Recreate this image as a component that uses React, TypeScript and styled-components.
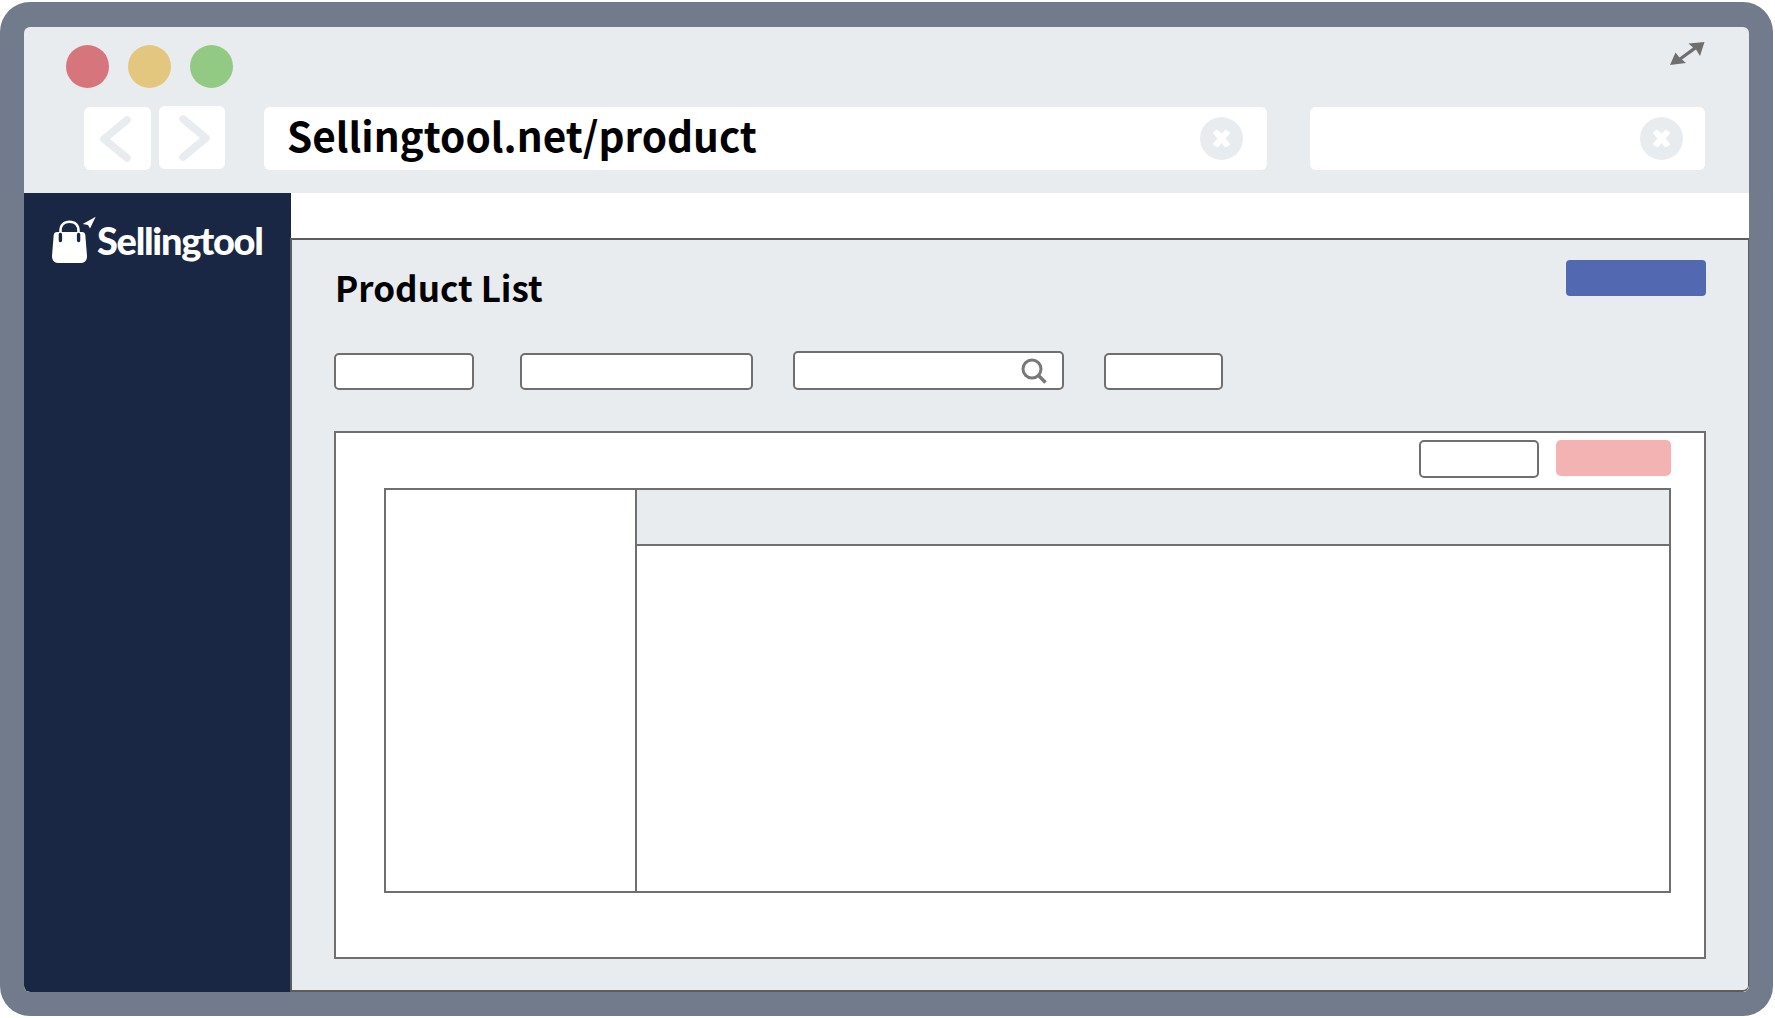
import styled, { createGlobalStyle } from "styled-components";

const lineColor = "#6f6f6f";
const panelColor = "#e9ecef";
const frameColor = "#727b8b";
const uiFont = `"Noto Sans CJK JP", "Noto Sans", sans-serif`;

const GlobalStyle = createGlobalStyle`
  * {
    box-sizing: border-box;
  }
  html,
  body {
    margin: 0;
    background: #fff;
  }
`;

const PageDiv = styled.div`
  padding-top: 2px;
  width: 1775px;
  height: 1018px;
  overflow: hidden;
`;

const BrowserFrame = styled.div`
  width: 1773px;
  height: 1014px;
  padding: 25px 24px 24px 24px;
  border-radius: 30px;
  background: ${frameColor};
`;

const BrowserWindow = styled.div`
  display: flex;
  flex-direction: column;
  height: 100%;
  border-radius: 6px;
  background: ${panelColor};
  overflow: hidden;
`;

const TopBar = styled.header`
  flex: none;
  height: 166px;
  padding: 14px 43px 0 42px;
`;

const LightsRow = styled.div`
  display: flex;
  justify-content: space-between;
  align-items: flex-start;
  height: 66px;
`;

const Lights = styled.div`
  display: flex;
  gap: 19px;
  padding-top: 4px;
`;

const Light = styled.span<{ $color: string }>`
  width: 43px;
  height: 43px;
  border-radius: 50%;
  background: ${(p) => p.$color};
`;

const AddressRow = styled.div`
  display: flex;
  align-items: flex-start;
  padding-left: 18px;
`;

const NavButton = styled.button<{ $width: number; $gapAfter: number; $lift?: boolean }>`
  display: flex;
  align-items: center;
  justify-content: center;
  width: ${(p) => p.$width}px;
  height: 63px;
  margin-right: ${(p) => p.$gapAfter}px;
  margin-top: ${(p) => (p.$lift ? -1 : 0)}px;
  padding: 0;
  border: 0;
  border-radius: 6px;
  background: #fff;
`;

const AddressField = styled.div<{ $width: number; $gapAfter?: number; $inset: number }>`
  display: flex;
  align-items: center;
  justify-content: space-between;
  width: ${(p) => p.$width}px;
  height: 63px;
  margin-right: ${(p) => p.$gapAfter ?? 0}px;
  padding: 0 ${(p) => p.$inset}px 0 23px;
  border-radius: 6px;
  background: #fff;
`;

const AddressText = styled.span`
  margin-top: -7px;
  color: #000;
  font-family: ${uiFont};
  font-size: 40.5px;
  font-weight: 700;
  line-height: 60px;
`;

const ClearButton = styled.span`
  display: flex;
  align-items: center;
  justify-content: center;
  flex: none;
  width: 43px;
  height: 43px;
  margin-left: auto;
  border-radius: 50%;
  background: ${panelColor};
`;

const WindowBody = styled.div`
  flex: 1;
  display: flex;
  min-height: 0;
`;

const Sidebar = styled.aside`
  flex: none;
  width: 267px;
  padding: 23px 0 0 28px;
  background: #1a2744;
  border-bottom-left-radius: 6px;
`;

const Logo = styled.div`
  display: flex;
  align-items: flex-start;
`;

const LogoText = styled.span`
  margin: 0 0 0 -1px;
  color: #fff;
  font-family: Lato, sans-serif;
  font-size: 38px;
  font-weight: 900;
  letter-spacing: -1.3px;
  line-height: 48px;
`;

const MainColumn = styled.div`
  flex: 1;
  display: flex;
  flex-direction: column;
  min-width: 0;
  background: #fff;
`;

const TopStrip = styled.div`
  flex: none;
  height: 45px;
`;

const Panel = styled.main`
  flex: 1;
  min-height: 0;
  margin-left: -1px;
  padding: 20px 42px 0 42px;
  background: ${panelColor};
  border: 2px solid #5c5c5c;
  border-right-width: 1px;
  border-bottom-right-radius: 6px;
`;

const PanelHeader = styled.div`
  display: flex;
  justify-content: space-between;
  align-items: flex-start;
  height: 91px;
`;

const Title = styled.h1`
  margin: 3px 0 0 1px;
  color: #000;
  font-family: ${uiFont};
  font-size: 35px;
  font-weight: 700;
  line-height: 48px;
`;

const PrimaryButton = styled.button`
  width: 140px;
  height: 36px;
  border: 0;
  border-radius: 4px;
  background: #5269b2;
`;

const FilterRow = styled.div`
  display: flex;
  align-items: flex-end;
  height: 39px;
  margin-bottom: 41px;
`;

const FilterBox = styled.div<{ $width: number; $gapAfter?: number; $tall?: boolean }>`
  display: flex;
  align-items: center;
  justify-content: flex-end;
  width: ${(p) => p.$width}px;
  height: ${(p) => (p.$tall ? 39 : 37)}px;
  margin-right: ${(p) => p.$gapAfter ?? 0}px;
  padding-right: 15px;
  border: 2px solid ${lineColor};
  border-radius: 5px;
  background: #fff;
`;

const Card = styled.section`
  height: 528px;
  padding: 7px 33px 0 48px;
  border: 2px solid ${lineColor};
  background: #fff;
`;

const CardActions = styled.div`
  display: flex;
  justify-content: flex-end;
  gap: 17px;
  height: 48px;
`;

const OutlineButton = styled.button`
  width: 120px;
  height: 38px;
  border: 2px solid ${lineColor};
  border-radius: 5px;
  background: #fff;
`;

const DangerButton = styled.button`
  width: 115px;
  height: 36px;
  border: 0;
  border-radius: 5px;
  background: #f4b3b3;
`;

const TableBox = styled.div`
  display: flex;
  height: 405px;
  border: 2px solid ${lineColor};
`;

const TableSide = styled.div`
  flex: none;
  width: 251px;
  border-right: 2px solid ${lineColor};
`;

const TableMain = styled.div`
  flex: 1;
`;

const TableHead = styled.div`
  height: 56px;
  background: ${panelColor};
  border-bottom: 2px solid ${lineColor};
`;

const BackIcon = () => (
  <svg width="36" height="46" viewBox="0 0 36 46" fill="none">
    <path d="M27 4 L4 23 L27 42" stroke={panelColor} strokeWidth="7.5" strokeLinecap="round" strokeLinejoin="round" />
  </svg>
);

const ForwardIcon = () => (
  <svg width="36" height="46" viewBox="0 0 36 46" fill="none">
    <path d="M9 4 L32 23 L9 42" stroke={panelColor} strokeWidth="7.5" strokeLinecap="round" strokeLinejoin="round" />
  </svg>
);

const ClearIcon = () => (
  <svg width="17" height="17" viewBox="0 0 17 17" fill="none">
    <path d="M2 1 L15 16 M15 1 L2 16" stroke="#fff" strokeWidth="6" />
  </svg>
);

const ExpandIcon = () => (
  <svg width="36" height="26" viewBox="0 0 36 26">
    <path
      d="M34.5 1 L18.5 2.5 L23 6.5 L9.5 16.5 L5.5 11.5 L0 24 L16 22 L12 18.5 L26 8.5 L30 15 Z"
      fill="#6f6f6f"
    />
  </svg>
);

const SearchIcon = () => (
  <svg width="26" height="26" viewBox="0 0 26 26" fill="none">
    <circle cx="11" cy="11" r="9" stroke="#787878" strokeWidth="3" />
    <path d="M17.5 17.5 L24.5 24.5" stroke="#787878" strokeWidth="3.5" />
  </svg>
);

const LogoMark = () => (
  <svg width="46" height="48" viewBox="0 0 46 48" fill="none">
    <path
      d="M8.5 22 V15 C8.5 9 12 5.7 17.5 5.7 C23 5.7 26.5 9 26.5 15 V22"
      stroke="#fff"
      strokeWidth="2.6"
    />
    <path
      d="M5 16 H30 C32 16 33 17 33.3 19 L35 40 C35 44 33 47 29 47 H6 C2 47 0 44 0 40 L1.7 19 C2 17 3 16 5 16 Z"
      fill="#fff"
    />
    <path d="M8.4 18.5 V24.5 M26.6 18.5 V24.5" stroke="#1a2744" strokeWidth="3.4" strokeLinecap="round" />
    <path d="M43.7 0.7 L30.7 8 L36 9 L38 12.5 Z" fill="#fff" />
  </svg>
);

export default function App() {
  return (
    <PageDiv>
      <GlobalStyle />
      <BrowserFrame>
        <BrowserWindow>
          <TopBar>
            <LightsRow>
              <Lights>
                <Light $color="#d6757c" />
                <Light $color="#e4c77f" />
                <Light $color="#92c983" />
              </Lights>
              <ExpandIcon />
            </LightsRow>
            <AddressRow>
              <NavButton $width={67} $gapAfter={8}>
                <BackIcon />
              </NavButton>
              <NavButton $width={66} $gapAfter={39} $lift>
                <ForwardIcon />
              </NavButton>
              <AddressField $width={1003} $gapAfter={43} $inset={24}>
                <AddressText>Sellingtool.net/product</AddressText>
                <ClearButton>
                  <ClearIcon />
                </ClearButton>
              </AddressField>
              <AddressField $width={395} $inset={22}>
                <ClearButton>
                  <ClearIcon />
                </ClearButton>
              </AddressField>
            </AddressRow>
          </TopBar>
          <WindowBody>
            <Sidebar>
              <Logo>
                <LogoMark />
                <LogoText>Sellingtool</LogoText>
              </Logo>
            </Sidebar>
            <MainColumn>
              <TopStrip />
              <Panel>
                <PanelHeader>
                  <Title>Product List</Title>
                  <PrimaryButton />
                </PanelHeader>
                <FilterRow>
                  <FilterBox $width={140} $gapAfter={46} />
                  <FilterBox $width={233} $gapAfter={40} />
                  <FilterBox $width={271} $gapAfter={40} $tall>
                    <SearchIcon />
                  </FilterBox>
                  <FilterBox $width={119} />
                </FilterRow>
                <Card>
                  <CardActions>
                    <OutlineButton />
                    <DangerButton />
                  </CardActions>
                  <TableBox>
                    <TableSide />
                    <TableMain>
                      <TableHead />
                    </TableMain>
                  </TableBox>
                </Card>
              </Panel>
            </MainColumn>
          </WindowBody>
        </BrowserWindow>
      </BrowserFrame>
    </PageDiv>
  );
}
